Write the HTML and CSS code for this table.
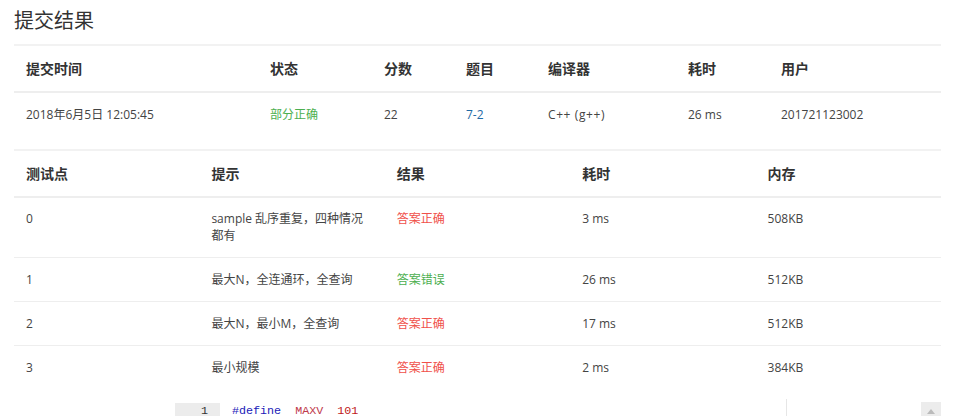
FILE: index.html
```html
<!DOCTYPE html>
<html lang="zh-CN">
<head>
<meta charset="utf-8">
<title>提交结果</title>
<link rel="stylesheet" href="styles.css">
</head>
<body>
<div class="page">
  <h2 class="title">提交结果</h2>
  <table class="tbl summary">
    <colgroup>
      <col class="c1"><col class="c2"><col class="c3"><col class="c4"><col class="c5"><col class="c6"><col>
    </colgroup>
    <thead>
      <tr><th>提交时间</th><th>状态</th><th>分数</th><th>题目</th><th>编译器</th><th>耗时</th><th>用户</th></tr>
    </thead>
    <tbody>
      <tr><td>2018年6月5日 12:05:45</td><td class="ok">部分正确</td><td>22</td><td><a class="link" href="#">7-2</a></td><td class="compiler">C++ (g++)</td><td>26 ms</td><td>201721123002</td></tr>
    </tbody>
  </table>

  <table class="tbl cases">
    <thead>
      <tr><th>测试点</th><th>提示</th><th>结果</th><th>耗时</th><th>内存</th></tr>
    </thead>
    <tbody>
      <tr><td>0</td><td>sample 乱序重复，四种情况都有</td><td class="err">答案正确</td><td>3 ms</td><td>508KB</td></tr>
      <tr><td>1</td><td>最大N，全连通环，全查询</td><td class="ok">答案错误</td><td>26 ms</td><td>512KB</td></tr>
      <tr><td>2</td><td>最大N，最小M，全查询</td><td class="err">答案正确</td><td>17 ms</td><td>512KB</td></tr>
      <tr><td>3</td><td>最小规模</td><td class="err">答案正确</td><td>2 ms</td><td>384KB</td></tr>
    </tbody>
  </table>

  <div class="code">
    <div class="gutter">1</div>
    <pre class="line"><span class="kw">#define</span>  <span class="id">MAXV</span>  <span class="num">101</span></pre>
    <div class="margin-line"></div>
  </div>
</div>
<button class="totop" type="button" aria-label="回到顶部"><svg width="8" height="5" viewBox="0 0 8 5"><path d="M0 5 L4 0 L8 5 Z" fill="#bbb"/></svg></button>
</body>
</html>
```
FILE: styles.css
```css
html, body {
  margin: 0;
  padding: 0;
  background: #fff;
}
body {
  font-family: "Open Sans", "Noto Sans CJK SC", sans-serif;
  font-size: 12px;
  color: #333;
  overflow: hidden;
  height: 416px;
  position: relative;
}
.page {
  padding: 0 13px 0 14px;
}
.title {
  margin: 0;
  padding-top: 7px;
  height: 28px;
  line-height: 28px;
  font-size: 20px;
  font-weight: normal;
  color: #333;
  margin-bottom: 9px;
}
.c1 { width: 244px; }
.c2 { width: 114px; }
.c3 { width: 82px; }
.c4 { width: 82px; }
.c5 { width: 140px; }
.c6 { width: 93px; }
.tbl {
  width: 100%;
  border-collapse: collapse;
  table-layout: fixed;
  border-top: 2px solid #f2f2f2;
}
.tbl th, .tbl td {
  text-align: left;
  vertical-align: top;
  line-height: 17px;
  padding: 13px 12px 13px;
}
.tbl th {
  font-size: 14px;
  font-weight: bold;
  color: #333;
  padding: 14px 12px 14px;
  border-bottom: 2px solid #eeeeee;
}
.tbl td {
  border-bottom: 1px solid #eeeeee;
  color: #444;
}
.cases tbody tr:first-child td {
  padding-top: 12px;
}
.summary {
  margin-bottom: 13px;
}
.summary td {
  padding: 13px 12px 13px;
  border-bottom: none;
}
.compiler {
  letter-spacing: 0.6px;
}
.cases tbody tr:last-child td {
  border-bottom: none;
}
.ok { color: #4caf50; }
.tbl td.ok { color: #4caf50; }
.tbl td.err { color: #f0504a; }
.link {
  color: #1f6aa6;
  text-decoration: none;
}
.code {
  position: relative;
  display: flex;
  margin-top: 14px;
  margin-left: 161px;
  height: 20px;
}
.gutter {
  width: 45px;
  box-sizing: border-box;
  padding-right: 12px;
  text-align: right;
  background: #ececec;
  font-family: "Liberation Mono", monospace;
  font-size: 11.7px;
  line-height: 17px;
  color: #333;
}
.line {
  margin: 0 0 0 12px;
  font-family: "Liberation Mono", monospace;
  font-size: 11.7px;
  line-height: 17px;
  color: #333;
}
.kw { color: #1a1ab8; }
.id { color: #c0394b; }
.num { color: #c01818; }
.margin-line {
  position: absolute;
  left: 611px;
  top: -4px;
  width: 1px;
  height: 24px;
  background: #e6e6e6;
}
.totop {
  position: absolute;
  right: 13px;
  top: 402px;
  width: 20px;
  height: 20px;
  border: none;
  padding: 0;
  background: #ececec;
  display: flex;
  align-items: flex-start;
  justify-content: center;
  padding-top: 7px;
}
```
